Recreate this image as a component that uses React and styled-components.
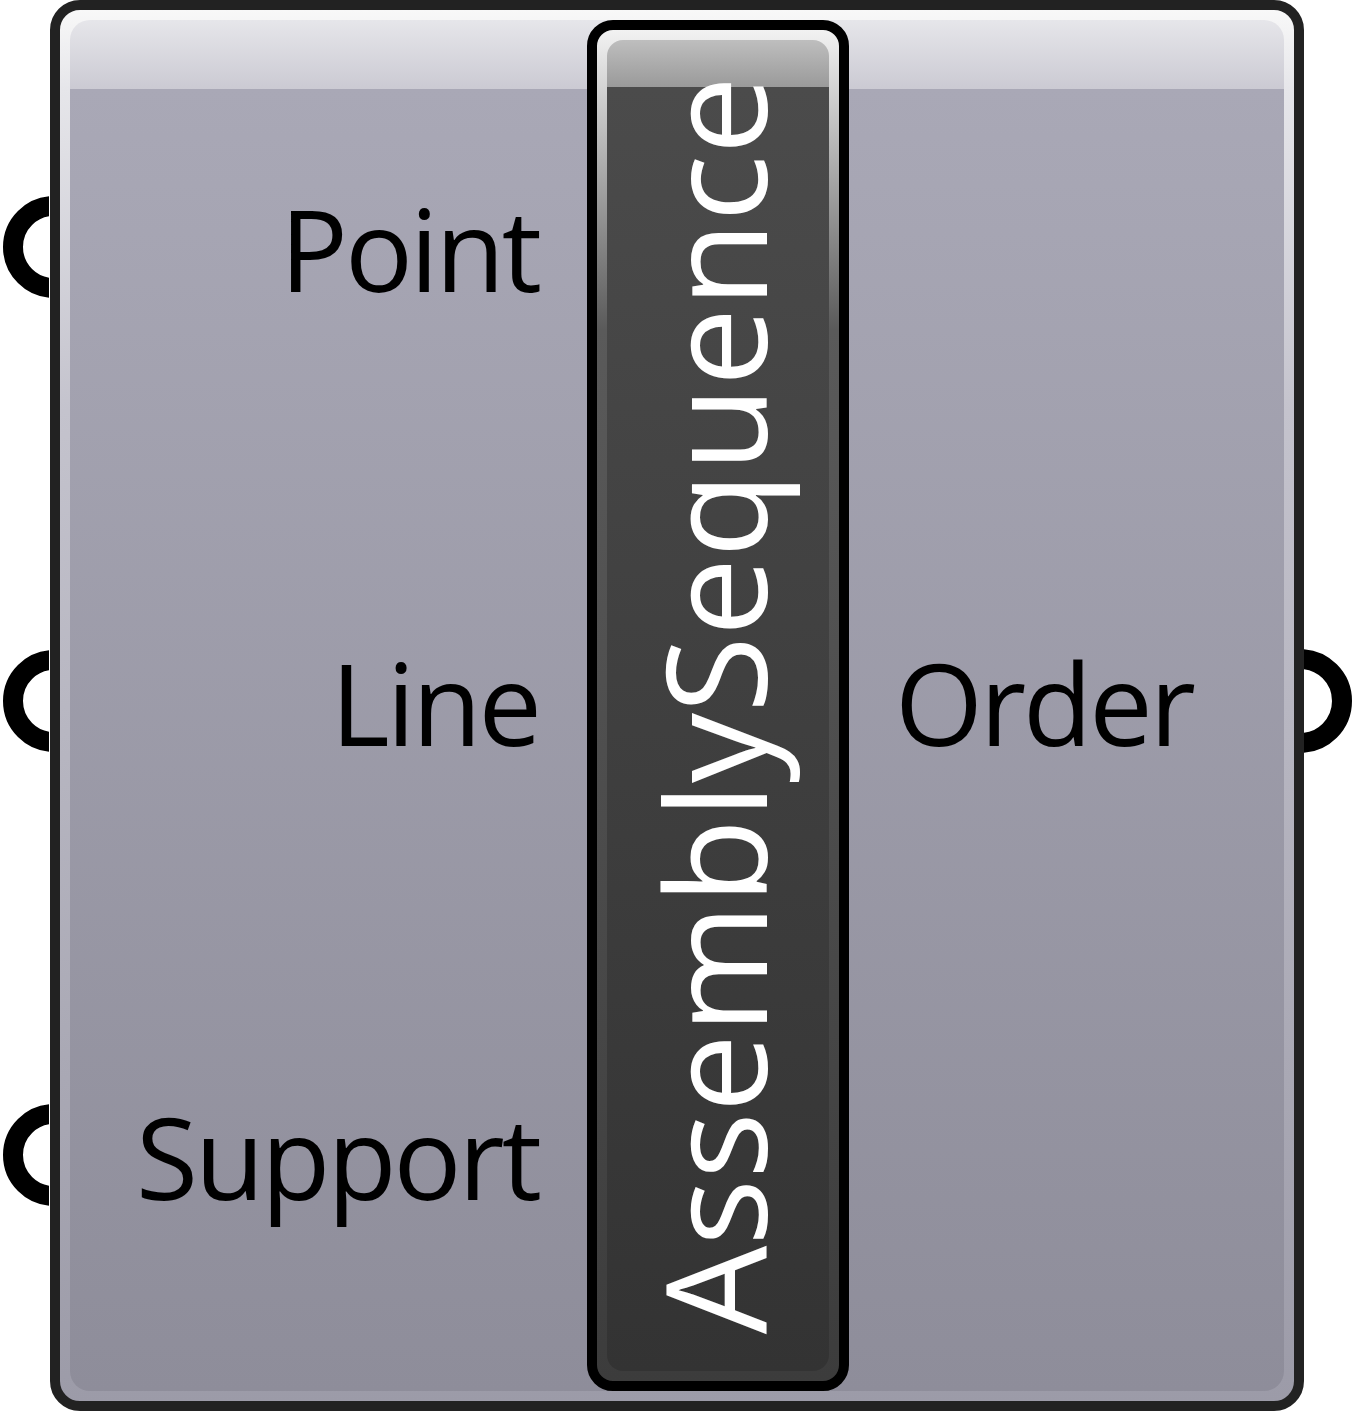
import React from 'react';
import styled, { createGlobalStyle } from 'styled-components';

const GlobalStyle = createGlobalStyle`
  html, body {
    margin: 0;
    padding: 0;
    background: #ffffff;
  }
  body {
    font-family: 'Open Sans', 'Noto Sans', sans-serif;
  }
`;

const Page = styled.div`
  width: 1353px;
  height: 1411px;
  display: flex;
  padding-left: 50px;
  box-sizing: border-box;
`;

const Frame = styled.div`
  width: 1254px;
  height: 1411px;
  box-sizing: border-box;
  border: 10px solid #222222;
  border-radius: 30px;
  padding: 10px;
  display: flex;
  background: linear-gradient(
    to bottom,
    #f8f8f8 0px,
    #e6e6ea 79px,
    #c4c3cd 400px,
    #9c9ba8 100%
  );
`;

const Body = styled.div`
  flex: 1;
  display: grid;
  grid-template-columns: 517px 262px 1fr;
  border-radius: 20px;
  background: linear-gradient(
    to bottom,
    #e6e6ea 0px,
    #cbcad3 69px,
    #a9a8b6 69px,
    #8e8d9a 100%
  );
`;

const Side = styled.div`
  display: flex;
  flex-direction: column;
`;

const Row = styled.div`
  position: relative;
  box-sizing: border-box;
  height: 454px;
  display: flex;
  align-items: center;
  justify-content: ${(p) => (p.$output ? 'flex-start' : 'flex-end')};
  padding: ${(p) => (p.$output ? '2px 0 0 46px' : '2px 48px 0 0')};
`;

const Label = styled.span`
  font-family: 'Open Sans', 'Noto Sans', sans-serif;
  font-size: 113px;
  line-height: 1;
  letter-spacing: -3px;
  color: #000000;
  white-space: nowrap;
`;

const Port = styled.svg`
  position: absolute;
  top: 50%;
  transform: translateY(-50%);
  ${(p) => (p.$output ? 'left: calc(100% + 20px);' : 'left: -67px;')}
`;

const Bar = styled.div`
  box-sizing: border-box;
  border: 10px solid #000000;
  border-radius: 26px;
  padding: 10px;
  display: flex;
  background: linear-gradient(
    to bottom,
    #f2f2f2 0px,
    #d4d4d4 57px,
    #5a5a5a 300px,
    #3c3c3c 100%
  );
`;

const BarFill = styled.div`
  flex: 1;
  border-radius: 16px;
  display: flex;
  align-items: center;
  justify-content: center;
  padding-right: 10px;
  background: linear-gradient(
    to bottom,
    #bebebe 0px,
    #9a9a9a 47px,
    #4b4b4b 47px,
    #333333 100%
  );
`;

const Title = styled.div`
  writing-mode: vertical-rl;
  transform: rotate(180deg);
  font-family: 'Open Sans', 'Noto Sans', sans-serif;
  font-size: 140px;
  line-height: 1;
  letter-spacing: 0;
  color: #ffffff;
  white-space: nowrap;
`;

function PortRing({ output }) {
  return output ? (
    <Port $output width="48" height="106" viewBox="0 0 48 106">
      <circle cx="-4" cy="53" r="42" fill="none" stroke="#000" strokeWidth="20" />
    </Port>
  ) : (
    <Port width="46" height="104" viewBox="0 0 46 104">
      <circle cx="51" cy="52" r="41" fill="none" stroke="#000" strokeWidth="20" />
    </Port>
  );
}

const inputs = ['Point', 'Line', 'Support'];

export default function App() {
  return (
    <Page>
      <GlobalStyle />
      <Frame>
        <Body>
          <Side>
            {inputs.map((name) => (
              <Row key={name}>
                <PortRing />
                <Label>{name}</Label>
              </Row>
            ))}
          </Side>
          <Bar>
            <BarFill>
              <Title>AssemblySequence</Title>
            </BarFill>
          </Bar>
          <Side>
            <Row />
            <Row $output>
              <Label>Order</Label>
              <PortRing output />
            </Row>
          </Side>
        </Body>
      </Frame>
    </Page>
  );
}
